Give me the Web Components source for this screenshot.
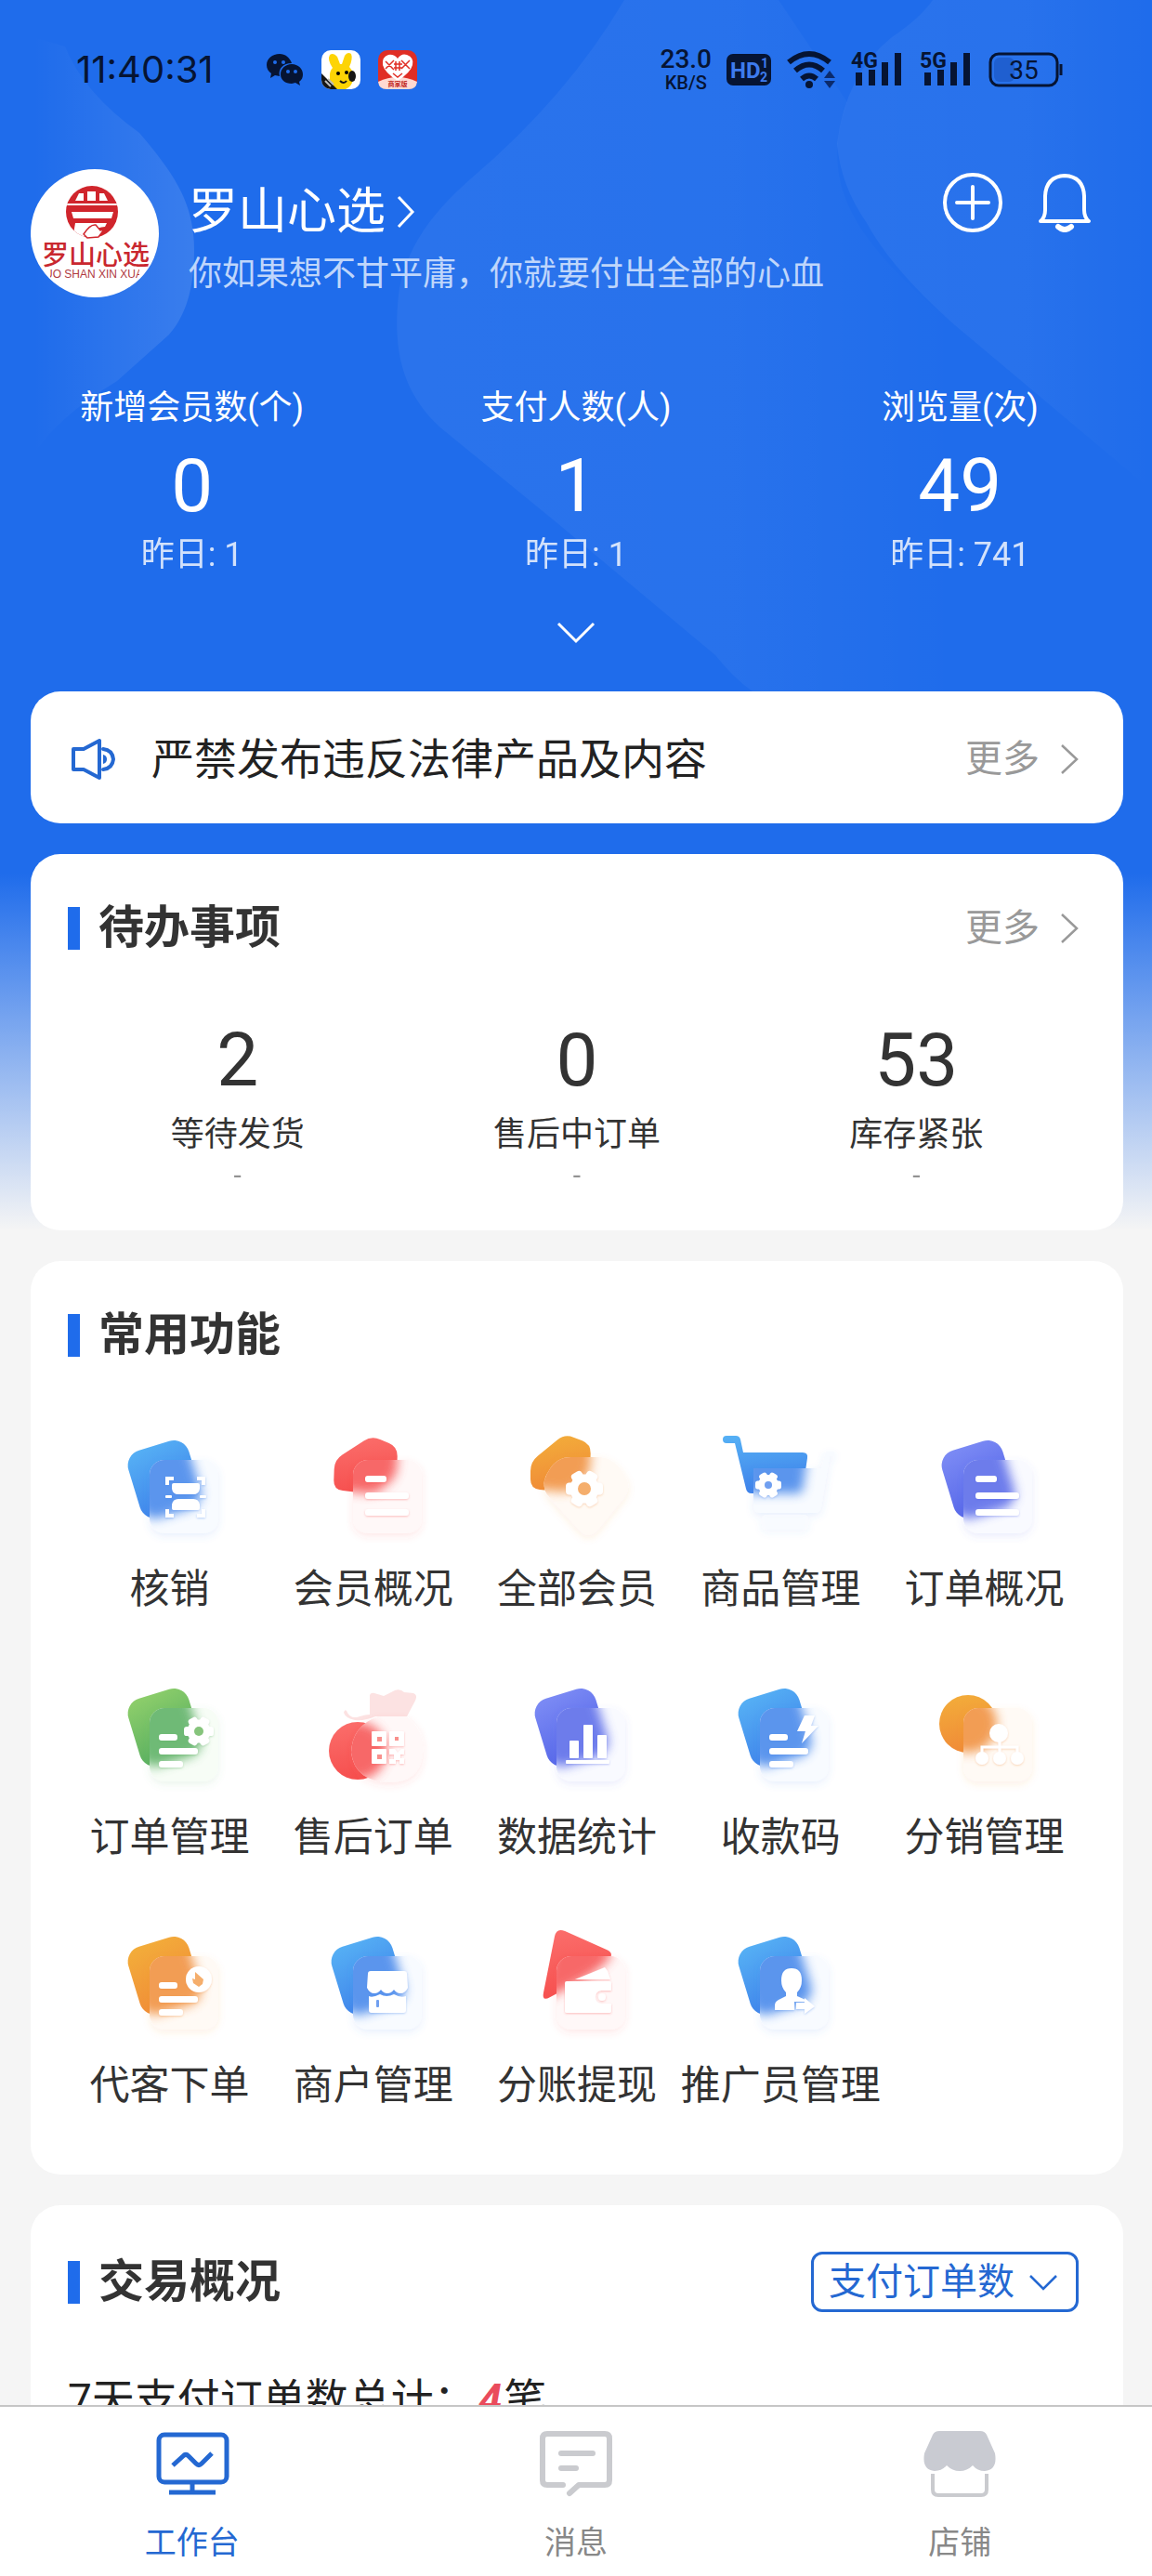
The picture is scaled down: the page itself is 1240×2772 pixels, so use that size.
<!DOCTYPE html>
<html lang="zh-CN">
<head>
<meta charset="UTF-8">
<meta name="viewport" content="width=device-width, initial-scale=1">
<title>工作台</title>
<style>
    html, body {
        margin: 0;
        height: 100%;
    }
    body {
        font-family: Roboto, "Noto Sans CJK SC", sans-serif;
        color: #333;
        background: #f5f5f5;
        --blue: #2468d2;
    }
</style>
</head>
<body>
<work-bench></work-bench>

<script>
// Polygon path with rounded corners
function roundedPoly(points, r) {
    const n = points.length;
    let d = '';
    points.forEach((p, i) => {
        const a = points[(i + n - 1) % n];
        const b = points[(i + 1) % n];
        const la = Math.hypot(a[0] - p[0], a[1] - p[1]);
        const lb = Math.hypot(b[0] - p[0], b[1] - p[1]);
        const ra = Math.min(r, la / 2) / la;
        const rb = Math.min(r, lb / 2) / lb;
        const s = [p[0] + (a[0] - p[0]) * ra, p[1] + (a[1] - p[1]) * ra];
        const e = [p[0] + (b[0] - p[0]) * rb, p[1] + (b[1] - p[1]) * rb];
        d += `${i ? 'L' : 'M'}${s[0].toFixed(1)} ${s[1].toFixed(1)}Q${p[0]} ${p[1]} ${e[0].toFixed(1)} ${e[1].toFixed(1)}`;
    });
    return d + 'Z';
}

function gear(cx, cy, r, hole) {
    let teeth = '';
    for (let i = 0; i < 6; i++) {
        teeth += `<rect x="${cx - r * 0.32}" y="${cy - r}" width="${r * 0.64}" height="${r}" rx="${r * 0.2}" transform="rotate(${i * 60 + 30} ${cx} ${cy})"/>`;
    }
    return `${teeth}<circle cx="${cx}" cy="${cy}" r="${r * 0.78}"/><circle cx="${cx}" cy="${cy}" r="${hole}" fill="var(--hole)"/>`;
}

function bars(list) {
    return list.map(([x, y, w]) => `<rect x="${x}" y="${y}" width="${w}" height="7" rx="3"/>`).join('');
}

const TILE = '<rect x="-34" y="-38" width="68" height="76" rx="17" transform="translate(54 52) rotate(-17)"/>';
const GLASS = '<rect x="38" y="31" width="74" height="79" rx="16"/>';
const LIST = bars([[51, 48, 23], [51, 66, 47], [51, 84, 47]]);
const SHORT_LIST = bars([[48, 59, 20], [48, 74, 42], [48, 88, 26]]);

const PALETTES = {
    blue: ['#56b1f5', '#3f83ea', '#f8fbff', '#6f9ff0'],
    red: ['#fb6f6c', '#f6504f', '#fff8f8', '#f8908c'],
    orange: ['#f3ae3a', '#f08c38', '#fffaf5', '#f5ae6c'],
    indigo: ['#7d8cf5', '#5566e8', '#f9faff', '#6d7cee'],
    green: ['#8fcf6b', '#58ae60', '#f7fdf6', '#86c47c']
};

const ICONS = {
    scan: { color: 'blue', glyph: '<path d="M57 58v-7h7M89 51h7v7M57 84v7h7M89 91h7v-7" fill="none" stroke="#fff" stroke-width="4"/><path d="M62 58q0-2 2-2h26q2 0 2 2v4q-1 6-7 6H69q-6 0-7-6zM62 83q0 2 2 2h26q2 0 2-2v-4q-1-6-7-6H69q-6 0-7 6z"/><rect x="55" y="69" width="7" height="3" rx="1"/><rect x="92" y="69" width="7" height="3" rx="1"/>' },
    member: { color: 'red', back: `<path d="${roundedPoly([[58, 5], [86, 17], [85, 48], [62, 68], [17, 63], [18, 31]], 10)}"/>`, glyph: LIST },
    members: { color: 'orange', back: `<path d="${roundedPoly([[47, 3], [75, 14], [74, 46], [52, 66], [10, 62], [10, 33]], 10)}"/>`, front: `<path d="${roundedPoly([[38, 28], [98, 28], [120, 60], [73, 118], [20, 60]], 16)}"/>`, glyph: gear(68, 62, 20, 7) },
    cart: { color: 'blue', back: '<path d="M2 5h10q4 0 5 4l3 14h64q6 0 5 6l-5 34q-1 4-5 4H29q-5 0-6-5L11 13H2q-4 0-4-4t4-4z"/>', front: '<path d="M31 40h73l5-18h9v5h-5l-9 55q-1 6-7 6H38q-7 0-7-7z"/><rect x="40" y="90" width="50" height="16" rx="5" opacity=".6"/>', glyph: gear(47, 58, 14, 4) },
    order: { color: 'indigo', glyph: LIST },
    orderManage: { color: 'green', glyph: SHORT_LIST + gear(91, 56, 16, 5) },
    afterSale: {
        color: 'red',
        back: '<circle cx="43" cy="77" r="31"/>',
        extra: '<path d="M31 34q3 8 11 7 9-3 14-3V17q1-3 5-2l10 3 12-6q6-2 10 2l10 1q5 2 2 8L96 40H62q-11 5-22 4-10-2-12-8 1-4 3-2z" fill="#fbd3d2" opacity=".65"/>',
        front: '<path d="M65 40h30q20 14 18 40-3 31-36 31-37-1-41-32 1-29 29-39z"/>',
        glyph: '<rect x="58" y="56" width="16" height="16" rx="1"/><rect x="77" y="56" width="16" height="16" rx="1"/><rect x="58" y="75" width="16" height="16" rx="1"/><path d="M77 75h6l3 4 4-4h3v6h-4v4h4v6h-5v-4h-4v4h-7v-5h5v-5h-5z"/><g fill="var(--hole)"><rect x="64" y="62" width="5" height="5"/><rect x="83" y="62" width="4" height="4"/><rect x="64" y="81" width="5" height="5"/></g>'
    },
    chart: { color: 'indigo', glyph: '<rect x="52" y="66" width="10" height="19" rx="1"/><rect x="67" y="49" width="10" height="36" rx="1"/><rect x="82" y="60" width="10" height="25" rx="1"/><rect x="48" y="87" width="47" height="4" rx="1"/>' },
    payCode: { color: 'blue', glyph: SHORT_LIST + '<path d="M86 39h11l-4 11h8L83 69l4-13h-9z"/>' },
    distribution: { color: 'orange', back: '<circle cx="43" cy="48" r="31"/>', glyph: '<circle cx="76" cy="58" r="10"/><circle cx="58" cy="85" r="7"/><circle cx="77" cy="85" r="7"/><circle cx="96" cy="85" r="7"/><path d="M77 64v18M58 84V73h38v11" fill="none" stroke="#fff" stroke-width="3"/>' },
    proxy: { color: 'orange', glyph: SHORT_LIST + '<circle cx="91" cy="56" r="14"/><path d="M87 48l9 8-1 5-4 3-6-4-1-5 3 1z" fill="var(--hole)"/>' },
    merchant: { color: 'blue', glyph: '<path d="M57 47h36q3 0 3 3l1 15q-3 6-8 6-4 0-7-4-3 4-7 4t-7-4q-3 4-7 4-5 0-8-6l1-15q0-3 3-3z"/><path d="M55 74q4 2 12-2 7 4 15 0 7 4 13 2v15q0 3-3 3H58q-3 0-3-3z"/><rect x="63" y="78" width="3" height="8" rx="1" fill="var(--hole)"/>' },
    withdraw: { color: 'red', back: `<path d="${roundedPoly([[38, 0], [101, 28], [78, 50], [22, 80]], 10)}"/>`, glyph: '<path d="M58 56l32-13 3 4 3 9z"/><path d="M49 58h46q2 0 2 2v8H86q-6 1-6 7t6 7h11v8q0 2-2 2H49q-2 0-2-2V60q0-2 2-2z"/><circle cx="87" cy="75" r="4"/>' },
    promoter: { color: 'blue', glyph: '<path d="M72 44q11 0 11 13 0 8-5 13v4l9 4v2h-12v9H54v-5q0-4 4-6l8-4v-4q-5-5-5-13 0-13 11-13z"/><path d="M77 81h9v-5l11 9-11 8v-5h-9z"/>' }
};

class FeatureIcon extends HTMLElement {
    constructor() {
        super();
        this.attachShadow({ mode: 'open' });
    }

    connectedCallback() {
        const icon = ICONS[this.getAttribute('name')];
        const [light, dark, tint, hole] = PALETTES[icon.color];
        const back = icon.back || TILE;
        const front = icon.front || GLASS;
        this.shadowRoot.innerHTML = `
            <style>
                :host { display: block; width: 120px; height: 120px; --hole: ${hole}; }
                svg { display: block; overflow: visible; }
            </style>
            <svg width="120" height="120" viewBox="0 0 120 120" aria-hidden="true">
                <defs>
                    <linearGradient id="fill" x1="0" y1="0" x2="0.2" y2="1">
                        <stop offset="0" stop-color="${light}"/>
                        <stop offset="1" stop-color="${dark}"/>
                    </linearGradient>
                    <filter id="blur" x="-40%" y="-40%" width="180%" height="180%"><feGaussianBlur stdDeviation="6"/></filter>
                    <filter id="shade" x="-30%" y="-30%" width="160%" height="160%"><feDropShadow dx="0" dy="3" stdDeviation="4" flood-color="${dark}" flood-opacity=".12"/></filter>
                    <filter id="lift" x="-20%" y="-20%" width="150%" height="150%"><feDropShadow dx="0" dy="1" stdDeviation="1" flood-color="${dark}" flood-opacity=".35"/></filter>
                    <clipPath id="pane">${front}</clipPath>
                </defs>
                ${icon.extra || ''}
                <g fill="url(#fill)">${back}</g>
                <g fill="${tint}" filter="url(#shade)">${front}</g>
                <g clip-path="url(#pane)"><g fill="${dark}" opacity=".85" filter="url(#blur)">${back}</g></g>
                <g fill="#fff" filter="url(#lift)">${icon.glyph}</g>
            </svg>
        `;
    }
}

class FeatureItem extends HTMLElement {
    constructor() {
        super();
        this.attachShadow({ mode: 'open' });
    }

    connectedCallback() {
        this.shadowRoot.innerHTML = `
            <style>
                :host { display: block; min-width: 0; }
                a {
                    display: flex;
                    flex-direction: column;
                    align-items: center;
                    gap: 20px;
                    color: inherit;
                    text-decoration: none;
                    font-size: 43px;
                    line-height: 60px;
                    white-space: nowrap;
                }
            </style>
            <a href="#${this.getAttribute('icon')}">
                <feature-icon name="${this.getAttribute('icon')}"></feature-icon>
                <span><slot></slot></span>
            </a>
        `;
    }
}

class StatItem extends HTMLElement {
    constructor() {
        super();
        this.attachShadow({ mode: 'open' });
    }

    connectedCallback() {
        this.shadowRoot.innerHTML = `
            <style>
                :host {
                    display: flex;
                    flex-direction: column;
                    align-items: center;
                    flex: 1;
                    min-width: 0;
                    font-size: 36px;
                    line-height: 48px;
                }
                .value { font-size: 80px; line-height: 100px; margin: 10px 0 0; }
                .note { opacity: 0.8; }
                :host([todo]) .value { order: -1; margin: 0 0 6px; }
                :host([todo]) .note { font-size: 30px; line-height: 40px; color: #777; }
            </style>
            <span class="label"><slot></slot></span>
            <span class="value">${this.getAttribute('value')}</span>
            <span class="note">${this.getAttribute('note')}</span>
        `;
    }
}

class MoreLink extends HTMLElement {
    constructor() {
        super();
        this.attachShadow({ mode: 'open' });
    }

    connectedCallback() {
        this.shadowRoot.innerHTML = `
            <style>
                :host { display: block; }
                a {
                    display: flex;
                    align-items: center;
                    gap: 22px;
                    padding-right: 8px;
                    color: #999;
                    font-size: 40px;
                    line-height: 60px;
                    text-decoration: none;
                }
            </style>
            <a href="#more"><slot></slot>
                <svg width="20" height="34" viewBox="0 0 20 34" fill="none" stroke="#999" stroke-width="2.5"><path d="M2 2l16 15L2 32"/></svg>
            </a>
        `;
    }
}

class AppCard extends HTMLElement {
    constructor() {
        super();
        this.attachShadow({ mode: 'open' });
    }

    connectedCallback() {
        this.shadowRoot.innerHTML = `
            <style>
                :host {
                    display: block;
                    background: #fff;
                    border-radius: 32px;
                    padding: 50px 40px 0;
                }
                header {
                    display: flex;
                    align-items: center;
                    justify-content: space-between;
                    min-height: 60px;
                }
                h2 {
                    display: flex;
                    align-items: center;
                    gap: 20px;
                    margin: 0;
                    font-size: 49px;
                    line-height: 60px;
                    font-weight: 700;
                }
                h2::before {
                    content: "";
                    width: 13px;
                    height: 46px;
                    background: #1f6ceb;
                }
            </style>
            <header>
                <h2>${this.getAttribute('heading')}</h2>
                <slot name="action"></slot>
            </header>
            <slot></slot>
        `;
    }
}

class NoticeBar extends HTMLElement {
    constructor() {
        super();
        this.attachShadow({ mode: 'open' });
    }

    connectedCallback() {
        this.shadowRoot.innerHTML = `
            <style>
                :host {
                    display: flex;
                    align-items: center;
                    gap: 38px;
                    background: #fff;
                    border-radius: 32px;
                    padding: 42px 40px 38px;
                }
                p {
                    flex: 1;
                    margin: 0;
                    font-size: 46px;
                    line-height: 62px;
                    color: #222;
                }
            </style>
            <svg width="52" height="48" viewBox="0 0 52 48" fill="none" stroke="#2468d2" stroke-width="4" stroke-linejoin="round">
                <path d="M6 13h11L34 4v40L17 35H6z"/>
                <path d="M38 13q10 1 11 11-1 10-11 11" stroke-linecap="round"/>
                <path d="M38 19v10q4-1 4-5t-4-5z" fill="#2468d2" stroke="none"/>
            </svg>
            <p><slot></slot></p>
            <more-link>更多</more-link>
        `;
    }
}

class StatusBar extends HTMLElement {
    constructor() {
        super();
        this.attachShadow({ mode: 'open' });
    }

    signal(label) {
        return `
            <svg width="58" height="42" viewBox="0 0 58 42">
                <text x="0" y="19" font-size="23">${label}</text>
                <path d="M5 24h7v14H5zM19 21h7v17h-7zM33 13h7v25h-7zM47 3h7v35h-7z" fill="#061433"/>
            </svg>`;
    }

    connectedCallback() {
        this.shadowRoot.innerHTML = `
            <style>
                :host {
                    display: flex;
                    align-items: center;
                    justify-content: space-between;
                    box-sizing: border-box;
                    height: 132px;
                    padding: 18px 96px 0 82px;
                    color: #061433;
                }
                div { display: flex; align-items: center; }
                .left { gap: 19px; }
                .right { gap: 16px; }
                time { font: 40px/48px Inter, sans-serif; margin-right: 38px; }
                .speed { display: flex; flex-direction: column; align-items: center; }
                .speed span { font: 500 28px/28px Roboto, sans-serif; }
                .speed small { font: 500 20px/22px Roboto, sans-serif; }
                text { font-family: Roboto, sans-serif; font-weight: 700; fill: #061433; }
            </style>
            <div class="left">
                <time>11:40:31</time>
                <svg width="40" height="36" viewBox="0 0 40 36">
                    <path d="M14 1C6 1 0 6 0 13c0 4 2 7 5 9l-1 5 5-3 5 1c-2-8 4-14 13-14C25 5 20 1 14 1z" fill="#061433"/>
                    <path d="M27 12c-7 0-12 5-12 11s5 10 12 10l4-1 5 3-1-4c3-2 4-5 4-8 0-6-5-11-12-11z" fill="#061433"/>
                    <g fill="#1f6ceb"><circle cx="9" cy="10" r="2"/><circle cx="18" cy="10" r="2"/><circle cx="23" cy="20" r="2"/><circle cx="31" cy="20" r="2"/></g>
                </svg>
                <svg width="42" height="42" viewBox="0 0 42 42">
                    <defs><clipPath id="app"><rect width="42" height="42" rx="10"/></clipPath></defs>
                    <g clip-path="url(#app)">
                        <rect width="42" height="42" fill="#fff"/>
                        <path d="M9 42V27q0-5 3-8Q6 10 9 5q4-3 8 2l3 8h2l3-9q3-5 7-2 2 5-2 14 5 5 4 13-1 8-8 11z" fill="#fdd405"/>
                        <path d="M0 25l17 17H0z" fill="#151515"/>
                        <path d="M4 33l6 6M7 31l6 6" stroke="#bbb" stroke-width="2"/>
                        <ellipse cx="33" cy="28" rx="4" ry="6" fill="#151515"/>
                        <circle cx="18" cy="25" r="2"/><circle cx="27" cy="24" r="2"/>
                        <path d="M20 33q4 4 7 0" fill="none" stroke="#151515" stroke-width="2"/>
                    </g>
                </svg>
                <svg width="42" height="42" viewBox="0 0 42 42">
                    <rect width="42" height="42" rx="10" fill="#e02e24"/>
                    <path d="M0 34q21-10 42 0-1 8-9 8H9q-8 0-9-8z" fill="#ffd9d2"/>
                    <path d="M21 9q4-6 10-4 8 3 6 11-2 8-16 17Q7 24 5 16 4 7 11 5q6-1 10 4z" fill="#fff"/>
                    <path d="M8 12l9 9M8 20l9-9M25 11l9 9M25 20l9-9M17 15h9M17 19h9M19 12v10M23 12v10M16 25l5 4 5-4" stroke="#e02e24" stroke-width="1.5" fill="none"/>
                    <text x="21" y="39" font-size="7" text-anchor="middle" style="fill:#c0281e;font-family:'Noto Sans CJK SC',sans-serif">商家版</text>
                </svg>
            </div>
            <div class="right">
                <div class="speed"><span>23.0</span><small>KB/S</small></div>
                <svg width="48" height="34" viewBox="0 0 48 34">
                    <rect width="48" height="34" rx="7" fill="#061433"/>
                    <text x="4" y="26" font-size="24" style="fill:#3d7bee">HD</text>
                    <text x="37" y="15" font-size="14" style="fill:#3d7bee">1</text>
                    <text x="36" y="30" font-size="14" style="fill:#3d7bee">2</text>
                </svg>
                <svg width="54" height="42" viewBox="0 0 54 42" fill="none" stroke="#061433" stroke-width="6">
                    <path d="M3 13q22-18 44 0M10 22q15-13 30 0M17 31q8-7 16 0"/>
                    <circle cx="25" cy="37" r="4" fill="#061433" stroke="none"/>
                    <path d="M41 30l6-8 6 8zM41 33h12l-6 8z" fill="#0b2a6b" stroke="none"/>
                </svg>
                ${this.signal('4G')}
                ${this.signal('5G')}
                <svg width="80" height="38" viewBox="0 0 80 38">
                    <rect x="2" y="2" width="72" height="34" rx="9" fill="none" stroke="#061433" stroke-width="3"/>
                    <rect x="6" y="6" width="22" height="26" rx="6" fill="#1f5fd0"/>
                    <path d="M78 13v12" stroke="#061433" stroke-width="3"/>
                    <text x="38" y="29" font-size="28" text-anchor="middle" style="font-weight:400">35</text>
                </svg>
            </div>
        `;
    }
}

class ShopProfile extends HTMLElement {
    constructor() {
        super();
        this.attachShadow({ mode: 'open' });
    }

    connectedCallback() {
        this.shadowRoot.innerHTML = `
            <style>
                :host {
                    display: flex;
                    align-items: center;
                    padding: 50px 61px 0 33px;
                    color: #fff;
                }
                .avatar { flex: none; width: 138px; height: 138px; border-radius: 50%; background: #fff; overflow: hidden; }
                .info { flex: 1; margin-left: 32px; padding-top: 10px; }
                a { display: inline-flex; align-items: center; gap: 12px; color: inherit; text-decoration: none; }
                h1 { margin: 0; font-size: 53px; line-height: 72px; font-weight: 400; }
                p { margin: 6px 0 0; font-size: 36px; line-height: 50px; color: #bfd6fb; }
                .actions { display: flex; align-self: flex-start; gap: 36px; margin-top: 4px; }
                button { display: block; width: 64px; height: 64px; border: 0; padding: 0; background: none; }
                svg { display: block; }
            </style>
            <svg class="avatar" viewBox="0 0 138 138" role="img" aria-label="罗山心选">
                <defs>
                    <clipPath id="seal"><circle cx="66" cy="46" r="28"/></clipPath>
                    <clipPath id="strip"><rect x="21" y="100" width="96" height="20"/></clipPath>
                </defs>
                <g clip-path="url(#seal)">
                    <rect x="36" y="16" width="60" height="60" fill="#d0252c"/>
                    <path d="M38 37h56v2H38zM44 46h45l-2 7H46zM48 58h34l-2 4q-8 0-14 6l-12 6-8-4zM52 26h5v8h-9zM61 24h9v10h-9zM74 26h5l4 8h-9z" fill="#fff"/>
                </g>
                <path d="M57 70q7-11 13-10l5 6 4-1-6 8-12 1z" fill="#fff" stroke="#d0252c" stroke-width="1.5"/>
                <text x="70" y="103" font-size="29" font-weight="500" text-anchor="middle" fill="#c9282f" font-family="Noto Sans CJK SC, sans-serif">罗山心选</text>
                <g clip-path="url(#strip)"><text x="69" y="117" font-size="12" text-anchor="middle" fill="#b03a3f" font-family="Liberation Sans, sans-serif">LUO SHAN XIN XUAN</text></g>
            </svg>
            <div class="info">
                <a href="#shop"><h1>罗山心选</h1>
                    <svg width="20" height="36" viewBox="0 0 20 36" fill="none" stroke="#fff" stroke-width="3"><path d="M2 2l15 16L2 34"/></svg>
                </a>
                <p><slot></slot></p>
            </div>
            <div class="actions">
                <button aria-label="添加">
                    <svg width="64" height="64" viewBox="0 0 64 64" fill="none" stroke="#fff" stroke-width="4" stroke-linecap="round"><circle cx="32" cy="32" r="30"/><path d="M32 15v34M15 32h34"/></svg>
                </button>
                <button aria-label="通知">
                    <svg width="64" height="64" viewBox="0 0 64 64" fill="none" stroke="#fff" stroke-width="4" stroke-linecap="round" stroke-linejoin="round"><path d="M5 52q5-4 5-12V25Q11 4 31 3q20 1 21 22v15q0 8 5 12z"/><path d="M24 58q7 6 14 0" stroke-width="6"/></svg>
                </button>
            </div>
        `;
    }
}

class TabItem extends HTMLElement {
    constructor() {
        super();
        this.attachShadow({ mode: 'open' });
    }

    connectedCallback() {
        this.shadowRoot.innerHTML = `
            <style>
                :host { display: block; flex: 1; color: #888; }
                :host([active]) { color: var(--blue); }
                a {
                    display: flex;
                    flex-direction: column;
                    align-items: center;
                    gap: 25px;
                    padding: 25px 0 12px;
                    color: inherit;
                    text-decoration: none;
                    font-size: 34px;
                    line-height: 48px;
                }
            </style>
            <a href="#tab"><slot name="icon"></slot><span><slot></slot></span></a>
        `;
    }
}

class WorkBench extends HTMLElement {
    constructor() {
        super();
        this.attachShadow({ mode: 'open' });
    }

    connectedCallback() {
        this.shadowRoot.innerHTML = `
            <style>
                :host { display: flex; flex-direction: column; height: 100vh; }
                main { flex: 1; min-height: 0; overflow-y: auto; scrollbar-width: none; }
                .page {
                    position: relative;
                    background: linear-gradient(#1f6ceb 0, #1f6ceb 940px, #f5f5f5 1324px);
                }
                .shapes { position: absolute; top: 0; left: 0; width: 100%; height: 744px; }
                .content { position: relative; }
                .stats { display: flex; padding-top: 95px; color: #fff; }
                .expand { display: flex; justify-content: center; align-items: center; width: 100%; height: 120px; margin: 0 0 3px; border: 0; padding: 0; background: none; }
                .cards { display: flex; flex-direction: column; gap: 33px; padding: 0 31px 0 33px; }
                .todo { display: flex; margin-top: 62px; padding-bottom: 39px; }
                .features { display: grid; grid-template-columns: repeat(5, 1fr); row-gap: 67px; margin-top: 73px; padding-bottom: 66px; }
                label { position: relative; display: block; margin-right: 8px; }
                label svg { position: absolute; right: 23px; top: 25px; pointer-events: none; }
                select {
                    appearance: none;
                    display: block;
                    box-sizing: border-box;
                    height: 65px;
                    border: 3px solid var(--blue);
                    border-radius: 12px;
                    padding: 0 66px 0 16px;
                    background: #fff;
                    color: var(--blue);
                    font: 40px/58px Roboto, "Noto Sans CJK SC", sans-serif;
                }
                .total { margin: 63px 0 0; padding-bottom: 60px; font-size: 46px; line-height: 62px; color: #222; }
                .total em { margin: 0 2px; color: #ea4b5c; font-weight: 700; }
                nav { display: flex; border-top: 2px solid #c6c6c6; background: #fff; }
            </style>
            <main>
                <div class="page">
                    <svg class="shapes" viewBox="0 0 1240 744" preserveAspectRatio="none" aria-hidden="true">
                        <defs>
                            <linearGradient id="a"><stop offset="0" stop-color="#fff" stop-opacity="0"/><stop offset="1" stop-color="#fff" stop-opacity=".12"/></linearGradient>
                            <linearGradient id="b"><stop offset="0" stop-color="#fff" stop-opacity=".05"/><stop offset=".6" stop-color="#fff" stop-opacity=".04"/><stop offset="1" stop-color="#fff" stop-opacity="0"/></linearGradient>
                        </defs>
                        <path d="M36 40L70 50Q90 100 150 143C190 190 209 220 209 270C209 320 195 345 182 360L126 410Q60 450 36 490z" fill="url(#a)"/>
                        <path d="M672 0H838L912 110C880 200 920 260 1028 350V744H810Q790 730 770 705L600 563L474 460C430 420 422 370 430 310C440 260 470 225 506 193Q610 105 672 0z" fill="url(#b)"/>
                        <path d="M1004 0H1240V528L1028 350Q960 290 933 240Q905 200 901 155Q910 80 960 40Q990 20 1004 0z" fill="url(#b)"/>
                    </svg>
                    <div class="content">
                        <status-bar></status-bar>
                        <shop-profile>你如果想不甘平庸，你就要付出全部的心血</shop-profile>
                        <section class="stats">
                            <stat-item value="0" note="昨日: 1">新增会员数(个)</stat-item>
                            <stat-item value="1" note="昨日: 1">支付人数(人)</stat-item>
                            <stat-item value="49" note="昨日: 741">浏览量(次)</stat-item>
                        </section>
                        <button class="expand" aria-label="展开">
                            <svg width="42" height="24" viewBox="0 0 42 24" fill="none" stroke="#fff" stroke-width="3"><path d="M2 2l19 19L40 2"/></svg>
                        </button>
                        <div class="cards">
                            <notice-bar>严禁发布违反法律产品及内容</notice-bar>
                            <app-card heading="待办事项">
                                <more-link slot="action">更多</more-link>
                                <div class="todo">
                                    <stat-item todo value="2" note="-">等待发货</stat-item>
                                    <stat-item todo value="0" note="-">售后中订单</stat-item>
                                    <stat-item todo value="53" note="-">库存紧张</stat-item>
                                </div>
                            </app-card>
                            <app-card heading="常用功能">
                                <div class="features">
                                    <feature-item icon="scan">核销</feature-item>
                                    <feature-item icon="member">会员概况</feature-item>
                                    <feature-item icon="members">全部会员</feature-item>
                                    <feature-item icon="cart">商品管理</feature-item>
                                    <feature-item icon="order">订单概况</feature-item>
                                    <feature-item icon="orderManage">订单管理</feature-item>
                                    <feature-item icon="afterSale">售后订单</feature-item>
                                    <feature-item icon="chart">数据统计</feature-item>
                                    <feature-item icon="payCode">收款码</feature-item>
                                    <feature-item icon="distribution">分销管理</feature-item>
                                    <feature-item icon="proxy">代客下单</feature-item>
                                    <feature-item icon="merchant">商户管理</feature-item>
                                    <feature-item icon="withdraw">分账提现</feature-item>
                                    <feature-item icon="promoter">推广员管理</feature-item>
                                </div>
                            </app-card>
                            <app-card heading="交易概况">
                                <label slot="action">
                                    <select aria-label="统计类型"><option>支付订单数</option></select>
                                    <svg width="30" height="17" viewBox="0 0 30 17" fill="none" stroke="#2468d2" stroke-width="2.5"><path d="M1 1l14 14L29 1"/></svg>
                                </label>
                                <p class="total">7天支付订单数总计：<em>4</em>笔</p>
                            </app-card>
                        </div>
                    </div>
                </div>
            </main>
            <nav>
                <tab-item active>
                    <svg slot="icon" width="80" height="72" viewBox="0 0 80 72" fill="none" stroke="#2468d2" stroke-width="5"><rect x="4" y="5" width="73" height="51" rx="6"/><path d="M40 56v10M15 67h50"/><path d="M19 38l11-10q3-3 6 0l8 8q3 3 6 0l11-11"/></svg>
                    工作台
                </tab-item>
                <tab-item>
                    <svg slot="icon" width="80" height="72" viewBox="0 0 80 72" fill="none" stroke="#cacbcf" stroke-width="6" stroke-linecap="round" stroke-linejoin="round"><path d="M26 59H9q-5 0-5-5V9q0-5 5-5h62q5 0 5 5v45q0 5-5 5H43L33 68"/><path d="M24 25h34M24 41h16"/></svg>
                    消息
                </tab-item>
                <tab-item>
                    <svg slot="icon" width="80" height="72" viewBox="0 0 80 72"><path d="M18 1h44q5 0 7 4l9 20q3 18-11 19-8 0-13-6-6 6-14 6t-14-6q-5 6-13 6Q-1 43 2 25l9-20q2-4 7-4z" fill="#c9cbd2"/><path d="M11 47v17q0 6 6 6h46q6 0 6-6V47" fill="none" stroke="#cacbcf" stroke-width="4"/></svg>
                    店铺
                </tab-item>
            </nav>
        `;
    }
}

customElements.define('feature-icon', FeatureIcon);
customElements.define('feature-item', FeatureItem);
customElements.define('stat-item', StatItem);
customElements.define('more-link', MoreLink);
customElements.define('app-card', AppCard);
customElements.define('notice-bar', NoticeBar);
customElements.define('status-bar', StatusBar);
customElements.define('shop-profile', ShopProfile);
customElements.define('tab-item', TabItem);
customElements.define('work-bench', WorkBench);
</script>
</body>
</html>
